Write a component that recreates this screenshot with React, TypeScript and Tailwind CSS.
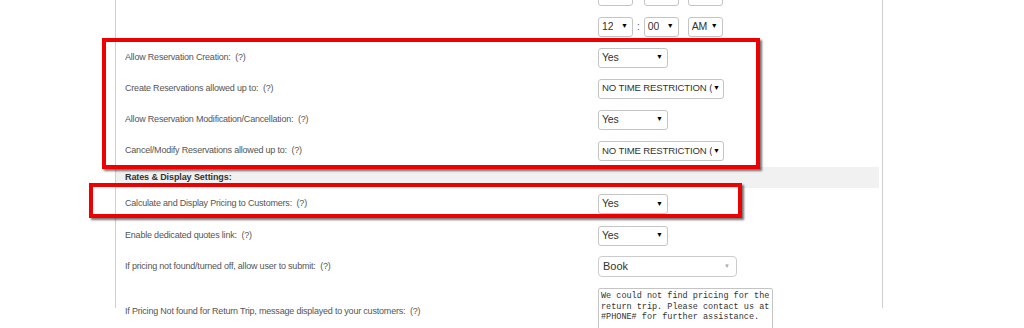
import React from "react";

const labelFont = { fontFamily: '"Liberation Sans", Arial, sans-serif' };

function Sel({ w, text, small = false }: { w: string; text: string; small?: boolean }) {
  return (
    <div
      className={`flex h-[20px] items-center justify-between overflow-hidden rounded-[3px] border border-[#c4c4c4] bg-white pl-[3px] text-[#333] ${
        small ? "pr-[3px] text-[9.6px]" : "pr-[4px] text-[10.5px]"
      } ${w}`}
      style={labelFont}
    >
      <span className={`whitespace-nowrap overflow-hidden ${small ? "tracking-[-0.15px]" : "tracking-[-0.2px]"}`}>
        {text}
      </span>
      <span className="ml-[1px] shrink-0 text-[7px] text-black">▼</span>
    </div>
  );
}

function Row({
  label,
  h = "h-[31px]",
  children,
}: {
  label: string;
  h?: string;
  children?: React.ReactNode;
}) {
  return (
    <div className={`flex items-center ${h}`}>
      <div
        className="w-[482px] whitespace-pre pl-[9px] text-[9px] tracking-[-0.2px] text-[#555]"
        style={labelFont}
      >
        {label}
      </div>
      <div className="flex items-center">{children}</div>
    </div>
  );
}

function TimeSelects() {
  return (
    <div className="flex items-center">
      <Sel w="w-[35px]" text="12" />
      <span className="mx-[4px] text-[10px] text-[#555]" style={labelFont}>:</span>
      <Sel w="w-[35px]" text="00" />
      <div className="w-[9px]" />
      <Sel w="w-[35px]" text="AM" />
    </div>
  );
}

export default function App() {
  return (
    <div className="relative h-[328px] w-[1024px] overflow-hidden bg-white">
      <div className="ml-[115px] h-full w-[768px] border-l border-r border-[#cfcfcf]">
        <div className="-mt-[20px] w-[763px]">
          <Row label="">
            <TimeSelects />
          </Row>
          <Row label="">
            <TimeSelects />
          </Row>
          <Row label="Allow Reservation Creation:  (?)">
            <Sel w="w-[70px]" text="Yes" />
          </Row>
          <Row label="Create Reservations allowed up to:  (?)">
            <Sel w="w-[126px]" text="NO TIME RESTRICTION (" small />
          </Row>
          <Row label="Allow Reservation Modification/Cancellation:  (?)">
            <Sel w="w-[70px]" text="Yes" />
          </Row>
          <Row label="Cancel/Modify Reservations allowed up to:  (?)" h="h-[32px]">
            <Sel w="w-[126px]" text="NO TIME RESTRICTION (" small />
          </Row>
          <div
            className="flex h-[21px] items-center bg-[#f1f1f1] pl-[9px] text-[9px] font-bold tracking-[-0.1px] text-[#333]"
            style={labelFont}
          >
            Rates &amp; Display Settings:
          </div>
          <Row label="Calculate and Display Pricing to Customers:  (?)" h="h-[32px]">
            <Sel w="w-[70px]" text="Yes" />
          </Row>
          <Row label="Enable dedicated quotes link:  (?)">
            <Sel w="w-[70px]" text="Yes" />
          </Row>
          <Row label="If pricing not found/turned off, allow user to submit:  (?)">
            <div
              className="flex h-[21px] w-[139px] items-center justify-between rounded-[4px] border border-[#cccccc] bg-white pl-[4px] pr-[6px] text-[11px] text-[#333]"
              style={labelFont}
            >
              <span>Book</span>
              <span className="text-[6px] text-[#aaa]">▼</span>
            </div>
          </Row>
          <div className="flex items-start pt-[6px]">
            <div
              className="w-[482px] whitespace-pre pl-[9px] pt-[17px] text-[9px] tracking-[-0.2px] text-[#555]"
              style={labelFont}
            >
              If Pricing Not found for Return Trip, message displayed to your customers:  (?)
            </div>
            <div
              className="h-[50px] w-[175px] rounded-[2px] border border-[#c4c4c4] bg-white px-[2px] pt-[2px] text-[8.5px] leading-[10.5px] text-[#333]"
              style={{ fontFamily: '"Liberation Mono", "Courier New", monospace' }}
            >
              We could not find pricing for the return trip. Please contact us at #PHONE# for further assistance.
            </div>
          </div>
        </div>
      </div>

      {/* annotation boxes */}
      <div className="absolute left-[102px] top-[38px] h-[131px] w-[658px] border-[4px] border-[#ee0000] shadow-[2px_2px_2px_rgba(0,0,0,0.55)]" />
      <div className="absolute left-[89px] top-[183px] h-[35px] w-[653px] border-[4px] border-[#ee0000] shadow-[2px_2px_2px_rgba(0,0,0,0.55)]" />
    </div>
  );
}
